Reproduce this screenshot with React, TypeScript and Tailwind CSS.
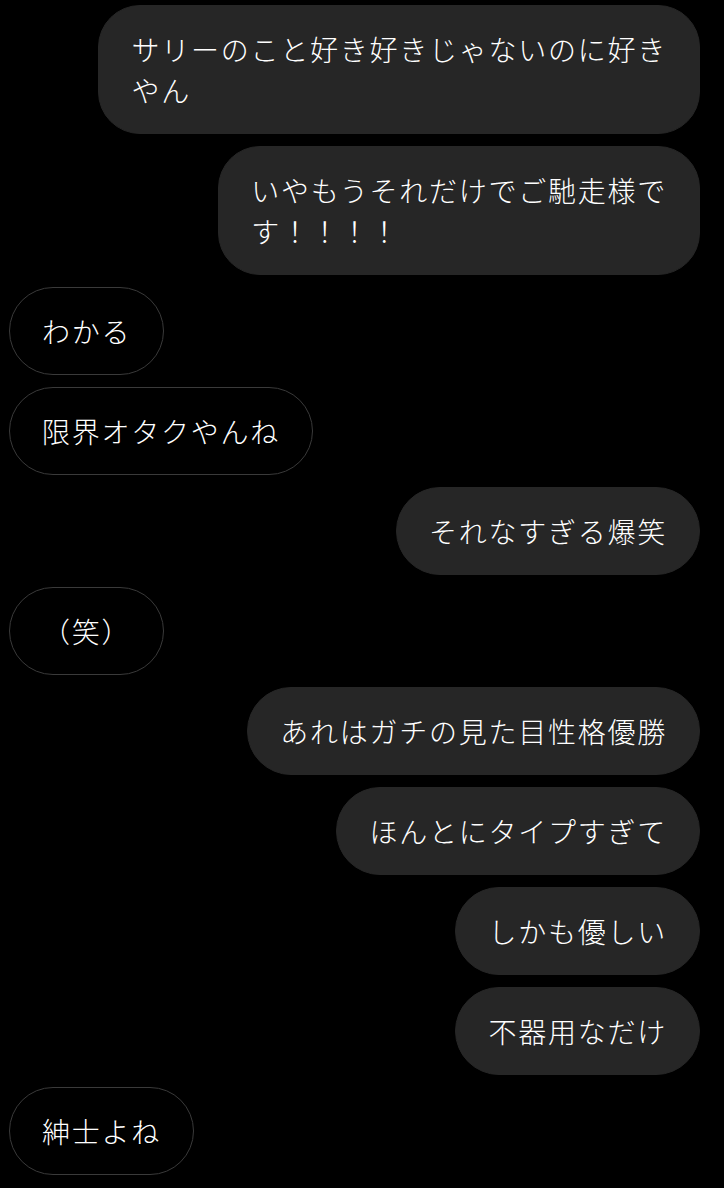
import React from 'react';

type Message = {
  id: number;
  mine: boolean;
  lines: string[];
};

const messages: Message[] = [
  { id: 1, mine: true, lines: ['サリーのこと好き好きじゃないのに好き', 'やん'] },
  { id: 2, mine: true, lines: ['いやもうそれだけでご馳走様で', 'す！！！！'] },
  { id: 3, mine: false, lines: ['わかる'] },
  { id: 4, mine: false, lines: ['限界オタクやんね'] },
  { id: 5, mine: true, lines: ['それなすぎる爆笑'] },
  { id: 6, mine: false, lines: ['（笑）'] },
  { id: 7, mine: true, lines: ['あれはガチの見た目性格優勝'] },
  { id: 8, mine: true, lines: ['ほんとにタイプすぎて'] },
  { id: 9, mine: true, lines: ['しかも優しい'] },
  { id: 10, mine: true, lines: ['不器用なだけ'] },
  { id: 11, mine: false, lines: ['紳士よね'] },
];

function Bubble({ message }: { message: Message }) {
  const { mine, lines } = message;
  return (
    <div className={`flex ${mine ? 'justify-end' : 'justify-start'}`}>
      <div
        className={`whitespace-nowrap border px-[32px] py-[22.5px] text-[28px] font-light leading-[41px] tracking-[1.75px] text-white ${
          lines.length > 1 ? 'rounded-[42px]' : 'rounded-full'
        } ${mine ? 'bg-[#262626] border-[#262626]' : 'bg-black border-[#3a3a3a]'}`}
      >
        {lines.map((line, i) => (
          <div key={i}>{line}</div>
        ))}
      </div>
    </div>
  );
}

export default function App() {
  return (
    <div
      className="min-h-screen bg-black"
      style={{ fontFamily: '"Noto Sans CJK JP", "Noto Sans", sans-serif' }}
    >
      <div className="flex flex-col gap-[12px] pl-[9px] pr-[24px] pt-[5px] pb-4">
        {messages.map((m) => (
          <Bubble key={m.id} message={m} />
        ))}
      </div>
    </div>
  );
}
